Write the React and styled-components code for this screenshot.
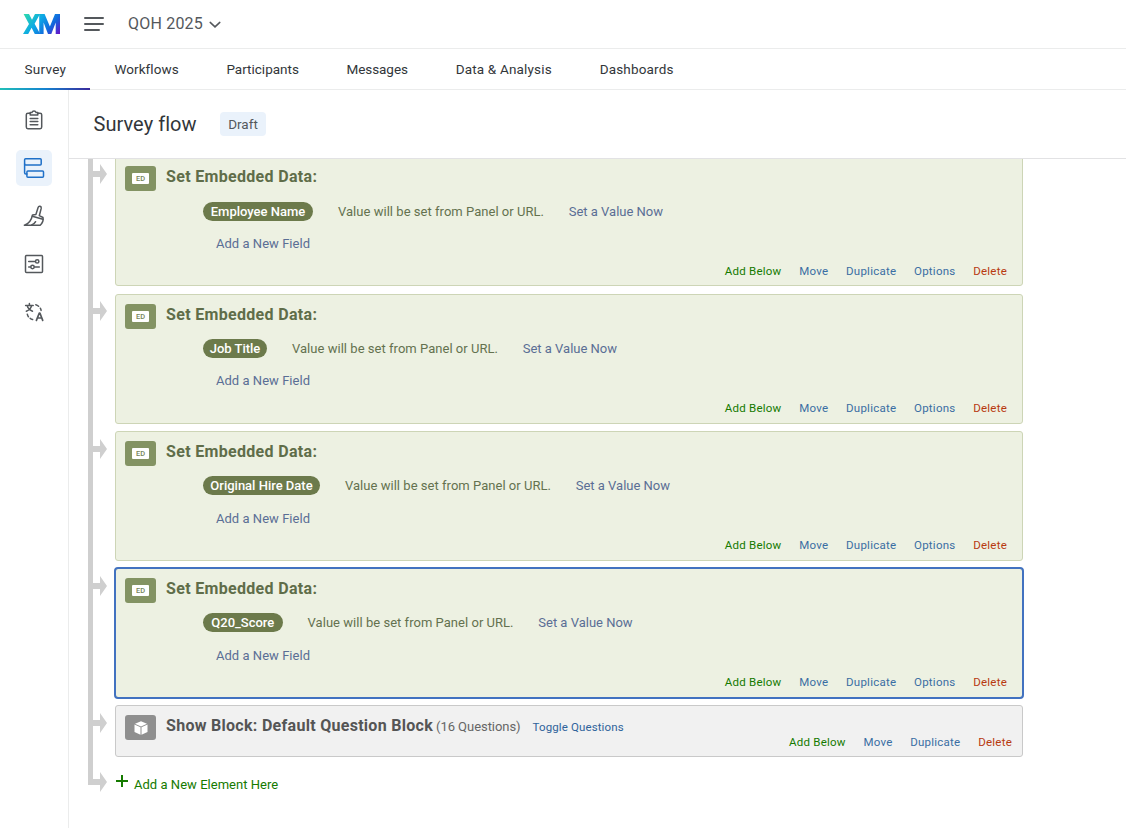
import React from "react";
import styled, { createGlobalStyle } from "styled-components";

const GlobalStyle = createGlobalStyle`
  * { box-sizing: border-box; }
  body {
    margin: 0;
    background: #fff;
    font-family: Roboto, "Liberation Sans", sans-serif;
    color: #32363a;
  }
`;

const Page = styled.div`
  height: 828px;
  display: flex;
  flex-direction: column;
  overflow: hidden;
`;

const TopBar = styled.header`
  height: 49px;
  flex: none;
  display: flex;
  align-items: center;
  padding: 0 23px;
  border-bottom: 1px solid #ebecec;
`;

const Project = styled.div`
  display: flex;
  align-items: center;
  gap: 6.5px;
  margin-left: 24px;
  font-size: 16px;
  line-height: 20px;
  padding-bottom: 1px;
  letter-spacing: 0.2px;
  color: #54585c;
`;

const Nav = styled.nav`
  height: 41px;
  flex: none;
  display: flex;
  border-bottom: 1px solid #ebecec;
`;

const Tab = styled.div`
  position: relative;
  padding: 0 0 0 24.4px;
  line-height: 41px;
  font-size: 13.5px;
  width: ${(p) => p.$width}px;
  white-space: nowrap;
  letter-spacing: ${(p) => p.$spacing || 0}px;
  color: #32363a;
`;

const Underline = styled.div`
  position: absolute;
  left: 0;
  right: 0;
  bottom: -1px;
  height: 2px;
  background: linear-gradient(90deg, #21bfb8, #1583d0 50%, #3a2a9c);
`;

const Body = styled.div`
  flex: 1;
  min-height: 0;
  display: flex;
`;

const Sidebar = styled.aside`
  width: 69px;
  flex: none;
  padding: 12px 16px;
  border-right: 1px solid #ebecec;
  display: flex;
  flex-direction: column;
  gap: 12px;
`;

const SideItem = styled.div`
  width: 36px;
  height: 36px;
  border-radius: 5px;
  display: flex;
  align-items: center;
  justify-content: center;
  background: ${(p) => (p.$active ? "#eaf2fb" : "transparent")};
  color: ${(p) => (p.$active ? "#1f70c8" : "#54585c")};
`;

const Main = styled.main`
  flex: 1;
  min-width: 0;
  display: flex;
  flex-direction: column;
`;

const TitleBar = styled.div`
  height: 69px;
  flex: none;
  display: flex;
  align-items: center;
  gap: 22.5px;
  padding: 0 24px 0 24.5px;
  border-bottom: 1px solid #e2e2e4;
`;

const Title = styled.h1`
  margin: 0;
  font-size: 20px;
  font-weight: 400;
  letter-spacing: 0.05px;
  color: #32363a;
  width: 104px;
  white-space: nowrap;
`;

const Badge = styled.span`
  width: 46px;
  height: 24px;
  line-height: 24px;
  border-radius: 4px;
  text-align: center;
  font-size: 13.5px;
  background: #eaf2fb;
  color: #54585c;
`;

const FlowArea = styled.div`
  flex: 1;
  min-height: 0;
  overflow: hidden;
`;

const FlowList = styled.div`
  margin: -2.75px 0 0 19px;
`;

const Row = styled.div`
  display: grid;
  grid-template-columns: 5px 22px 908px;
`;

const Rail = styled.div`
  background: #cfcfcf;
  height: ${(p) => (p.$height ? p.$height + "px" : "auto")};
`;

const ArrowCell = styled.div`
  padding-top: ${(p) => p.$top || 7.9}px;
  line-height: 0;
`;

const Card = styled.section`
  height: 130px;
  margin-bottom: 7.25px;
  padding: 9.1px 15px 0 9px;
  display: flex;
  flex-direction: column;
  background: #edf1e2;
  border: 1px solid #cdd5b6;
  border-radius: 3px;
  outline: ${(p) => (p.$selected ? "2px solid #4272c0" : "none")};
  outline-offset: -1px;
`;

const BlockCard = styled.section`
  height: 52px;
  padding: 9px 10px 0 9px;
  background: #f1f1f1;
  border: 1px solid #c9c9c9;
  border-radius: 3px;
`;

const CardHead = styled.div`
  display: flex;
  align-items: flex-start;
  height: 25px;
`;

const TypeIcon = styled.div`
  width: 31px;
  height: 25px;
  flex: none;
  border-radius: 3px;
  display: flex;
  align-items: center;
  justify-content: center;
  background: ${(p) => p.$color};
`;

const EdLabel = styled.span`
  width: 17px;
  height: 11px;
  border-radius: 1px;
  background: #fff;
  color: #75855a;
  font: 500 7.5px/11.5px Roboto, sans-serif;
  text-align: center;
`;

const CardTitle = styled.h2`
  margin: 0 0 0 10px;
  font-size: 16px;
  line-height: 22px;
  font-weight: 700;
  letter-spacing: ${(p) => p.$spacing}px;
  white-space: nowrap;
  color: ${(p) => p.$color};
`;

const FieldRow = styled.div`
  display: flex;
  align-items: center;
  height: 19px;
  margin: 10.3px 0 0 78px;
  font-size: 13px;
  white-space: nowrap;
`;

const Pill = styled.span`
  width: ${(p) => p.$width}px;
  height: 19px;
  line-height: 19px;
  border-radius: 10px;
  text-align: center;
  font-weight: 500;
  background: #6c7a4b;
  color: #fff;
`;

const ValueText = styled.span`
  width: 206px;
  margin-left: 25px;
  letter-spacing: 0.03px;
  color: #64714f;
`;

const FieldLink = styled.span`
  margin-left: 24.7px;
  color: #5a6e95;
`;

const AddField = styled.div`
  margin: 13.4px 0 0 91px;
  font-size: 13px;
  line-height: 19px;
  letter-spacing: 0.03px;
  color: #5a6e95;
`;

const Actions = styled.div`
  display: flex;
  justify-content: flex-end;
  gap: 17.8px;
  margin-top: ${(p) => p.$top}px;
  font-size: 11.5px;
  line-height: 16px;
  letter-spacing: 0.23px;
`;

const Action = styled.span`
  color: ${(p) => p.$color || "#3a6ea3"};
`;

const Count = styled.span`
  margin-left: 3px;
  font-size: 13px;
  line-height: 24px;
  letter-spacing: -0.05px;
  color: #666;
`;

const Toggle = styled.span`
  margin-left: 12px;
  font-size: 11.5px;
  line-height: 24px;
  letter-spacing: 0.12px;
  color: #2f639b;
`;

const AddElement = styled.div`
  display: flex;
  gap: 6px;
  height: 28px;
  padding: 18px 0 0 1px;
  font-size: 13px;
  line-height: 19px;
  letter-spacing: 0.03px;
  color: #157a00;
`;

const XmLogo = () => (
  <svg width="37" height="20" viewBox="0 0 37 20">
    <defs>
      <linearGradient id="xm" x1="3" y1="-3" x2="34" y2="23" gradientUnits="userSpaceOnUse">
        <stop offset="0" stopColor="#2fdcaa" />
        <stop offset="0.4" stopColor="#0ca8e6" />
        <stop offset="0.72" stopColor="#1266dc" />
        <stop offset="1" stopColor="#6a12c8" />
      </linearGradient>
    </defs>
    <g fill="url(#xm)">
      <path d="M.6 0H6L9 5.8L12 0H17L11.6 9.8L17.2 20H11.8L8.6 13.8L5.2 20H0L6 9.9Z" />
      <path d="M16.2 0H21.6L26.9 12.6L32 0H37V20H32.7V8.5L28.3 20H25L20.6 8.5V20H16.2Z" />
    </g>
  </svg>
);

const Hamburger = styled.svg`
  margin-left: 24px;
`;

const Arrow = () => (
  <svg width="14" height="20" viewBox="0 0 14 20" fill="#cfcfcf">
    <path d="M0 7H7V0L14 10L7 20V13H0Z" />
  </svg>
);

const icon = { width: 22, height: 22, viewBox: "0 0 22 22", fill: "none", stroke: "currentColor", strokeWidth: 1.5, strokeLinejoin: "round", strokeLinecap: "round" };

const ClipboardIcon = () => (
  <svg {...icon}>
    <path d="M7 4.2H4.9A1.6 1.6 0 0 0 3.3 5.8V18.1A1.6 1.6 0 0 0 4.9 19.7H17.1A1.6 1.6 0 0 0 18.7 18.1V5.8A1.6 1.6 0 0 0 17.1 4.2H15" />
    <path d="M7.2 5.9V3.6H8.9A2.2 2.2 0 0 1 13.1 3.6H14.8V5.9Z" />
    <path d="M7.2 9.5H14.8M7.2 12.6H14.8M7.2 15.7H14.8" />
  </svg>
);

const FlowIcon = () => (
  <svg {...icon}>
    <rect x="1.6" y="1.7" width="16.6" height="6.3" rx="1" />
    <rect x="3.9" y="14" width="16.6" height="6.2" rx="1" />
    <path d="M1.6 7V15.8Q1.6 17 2.8 17H3.9" />
  </svg>
);

const BrushIcon = () => (
  <svg {...icon}>
    <path d="M1.4 20.2H17.2C19.7 18 20.4 15 20 12.5L16.3 10.7L18.2 3.4C18.7 1.2 15.8 .4 15.1 2.5L12.9 9.5L9.5 9.9C8.7 14.5 6 18.6 1.4 20.2Z" />
    <path d="M9.3 11.3L19.9 14.3M8.7 20C10.5 19.4 12 17.8 12.6 16.7" />
  </svg>
);

const SlidersIcon = () => (
  <svg {...icon}>
    <rect x="2.5" y="2.5" width="17" height="17" rx="1" />
    <path d="M5.7 8.4H12.3M5.7 14H7.5M11.5 14H16.3" />
    <circle cx="14.2" cy="8.4" r="1.7" />
    <circle cx="9.5" cy="14" r="1.7" />
  </svg>
);

const TranslateIcon = () => (
  <svg {...icon}>
    <path d="M2.6 4.4H10.2M6.4 2.4V4.4M3.3 10.2C6.3 9 8 7.2 8.6 4.6M4.2 4.6C4.8 7.2 6.7 9 9.5 10.2" />
    <path d="M13.4 19.4L16.3 12H16.9L19.7 19.4M14.5 17H18.7" strokeWidth="1.7" />
    <path d="M12.8 3.8C14 4.1 14.8 4.6 15.6 5.3M17.3 7.2C17.8 8 18 8.5 18.1 9.4" />
    <path d="M4.3 13.2C4.5 14.2 4.8 14.9 5.4 15.7M7.2 17.3C8 17.9 8.6 18.2 9.6 18.5" />
  </svg>
);

const CubeIcon = () => (
  <svg width="14" height="14" viewBox="0 0 14 14">
    <path fill="#fff" d="M7 .2L13 2.7L7 5.4L1 2.7ZM.5 3.6L6.5 6.3V13.7L.5 11ZM13.5 3.6L7.5 6.3V13.7L13.5 11Z" />
  </svg>
);

const tabs = [
  { label: "Survey", width: 90, active: true, spacing: 0.3 },
  { label: "Workflows", width: 112, spacing: 0.08 },
  { label: "Participants", width: 120 },
  { label: "Messages", width: 109.3, spacing: -0.05 },
  { label: "Data & Analysis", width: 144, spacing: 0.17 },
  { label: "Dashboards", width: 122, spacing: 0.17 },
];

const sideIcons = [ClipboardIcon, FlowIcon, BrushIcon, SlidersIcon, TranslateIcon];

const fields = [
  { name: "Employee Name", width: 110 },
  { name: "Job Title", width: 64 },
  { name: "Original Hire Date", width: 117 },
  { name: "Q20_Score", width: 79.6, selected: true },
];

const EmbeddedData = ({ name, width, selected }) => (
  <Row>
    <Rail />
    <ArrowCell><Arrow /></ArrowCell>
    <Card $selected={selected}>
      <CardHead>
        <TypeIcon $color="#839363"><EdLabel>ED</EdLabel></TypeIcon>
        <CardTitle $color="#5f6d49" $spacing={0.32}>Set Embedded Data:</CardTitle>
      </CardHead>
      <FieldRow>
        <Pill $width={width}>{name}</Pill>
        <ValueText>Value will be set from Panel or URL.</ValueText>
        <FieldLink>Set a Value Now</FieldLink>
      </FieldRow>
      <AddField>Add a New Field</AddField>
      <Actions $top={9.7}>
        <Action $color="#157a00">Add Below</Action>
        <Action>Move</Action>
        <Action>Duplicate</Action>
        <Action>Options</Action>
        <Action $color="#b83a10">Delete</Action>
      </Actions>
    </Card>
  </Row>
);

export default function App() {
  return (
    <Page>
      <GlobalStyle />
      <TopBar>
        <XmLogo />
        <Hamburger width="20" height="14" viewBox="0 0 20 14" stroke="#54585c" strokeWidth="2" strokeLinecap="round">
          <path d="M1 1H19M1 7H19M1 13H15" />
        </Hamburger>
        <Project>
          QOH 2025
          <svg width="12" height="8" viewBox="0 0 12 8" fill="none" stroke="#54585c" strokeWidth="1.5" strokeLinecap="round">
            <path d="M1.2 2.4L6 6.9L10.8 2.4" />
          </svg>
        </Project>
      </TopBar>
      <Nav>
        {tabs.map((t) => (
          <Tab key={t.label} $width={t.width} $spacing={t.spacing}>
            {t.label}
            {t.active && <Underline />}
          </Tab>
        ))}
      </Nav>
      <Body>
        <Sidebar>
          {sideIcons.map((Icon, i) => (
            <SideItem key={i} $active={i === 1}><Icon /></SideItem>
          ))}
        </Sidebar>
        <Main>
          <TitleBar>
            <Title>Survey flow</Title>
            <Badge>Draft</Badge>
          </TitleBar>
          <FlowArea>
            <FlowList>
              {fields.map((f) => <EmbeddedData key={f.name} {...f} />)}
              <Row>
                <Rail />
                <ArrowCell><Arrow /></ArrowCell>
                <BlockCard>
                  <CardHead>
                    <TypeIcon $color="#8f8f8f"><CubeIcon /></TypeIcon>
                    <CardTitle $color="#555" $spacing={0.29}>Show Block: Default Question Block</CardTitle>
                    <Count>(16 Questions)</Count>
                    <Toggle>Toggle Questions</Toggle>
                  </CardHead>
                  <Actions $top={-6}>
                    <Action $color="#157a00">Add Below</Action>
                    <Action>Move</Action>
                    <Action>Duplicate</Action>
                    <Action $color="#b83a10">Delete</Action>
                  </Actions>
                </BlockCard>
              </Row>
              <Row>
                <Rail $height={27.75} />
                <ArrowCell $top={14.75}><Arrow /></ArrowCell>
                <AddElement>
                  <svg width="12" height="12" viewBox="0 0 12 12" stroke="#157a00" strokeWidth="2">
                    <path d="M6 0V12M0 6H12" />
                  </svg>
                  Add a New Element Here
                </AddElement>
              </Row>
            </FlowList>
          </FlowArea>
        </Main>
      </Body>
    </Page>
  );
}
